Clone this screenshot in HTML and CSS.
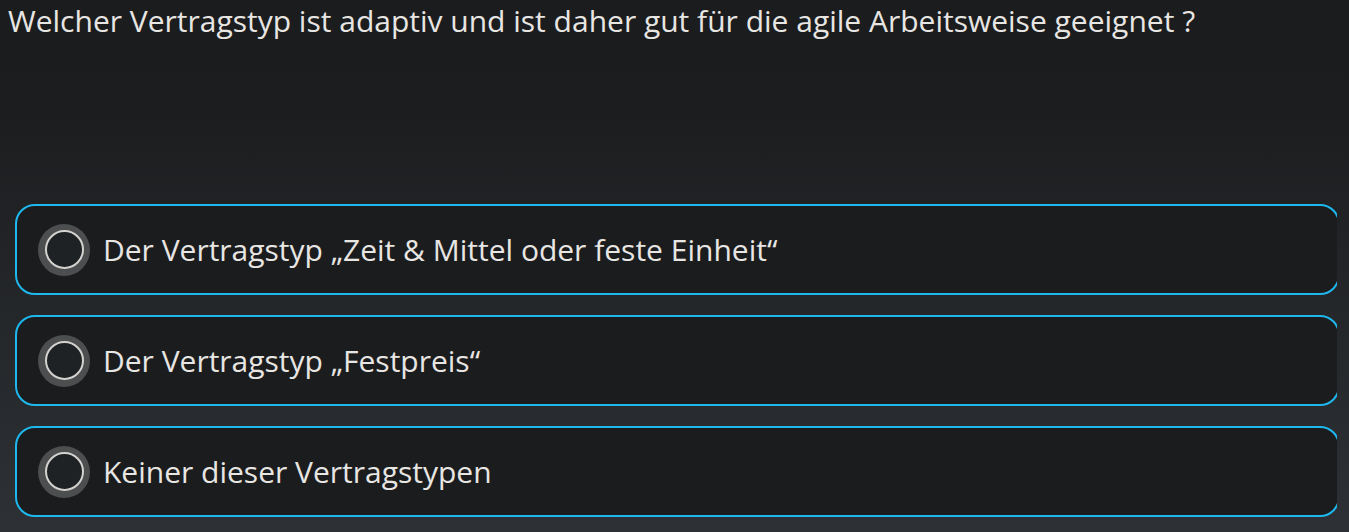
FILE: index.html
```html
<!DOCTYPE html>
<html lang="de">
<head>
<meta charset="utf-8">
<link rel="stylesheet" href="styles.css">
</head>
<body>
<div class="page">
  <h1 class="question">Welcher Vertragstyp ist adaptiv und ist daher gut für die agile Arbeitsweise geeignet ?</h1>
  <div class="answers">
    <label class="answer">
      <span class="radio"><span class="radio-inner"></span></span>
      <span class="answer-text">Der Vertragstyp „Zeit &amp; Mittel oder feste Einheit“</span>
    </label>
    <label class="answer">
      <span class="radio"><span class="radio-inner"></span></span>
      <span class="answer-text">Der Vertragstyp „Festpreis“</span>
    </label>
    <label class="answer">
      <span class="radio"><span class="radio-inner"></span></span>
      <span class="answer-text">Keiner dieser Vertragstypen</span>
    </label>
  </div>
</div>
</body>
</html>
```
FILE: styles.css
```css
html, body {
  margin: 0;
  padding: 0;
  height: 100%;
}
body {
  background: linear-gradient(180deg, #1b1c1e 0%, #1c1d1f 20%, #2d3135 100%);
  color: #e8e6e3;
  font-family: "Open Sans", "Noto Sans", sans-serif;
  overflow: hidden;
}
.page {
  width: 1337px;
  overflow: hidden;
}
.question {
  margin: 0;
  padding: 0 0 0 8px;
  font-size: 30px;
  font-weight: 400;
  line-height: 41px;
}
.answers {
  display: flex;
  flex-direction: column;
  gap: 20px;
  margin-top: 163px;
  padding-left: 15px;
}
.answer {
  display: flex;
  align-items: center;
  gap: 13px;
  width: 1325px;
  height: 91px;
  flex-shrink: 0;
  box-sizing: border-box;
  border: 2px solid #1fb8ee;
  border-radius: 20px;
  background: #1b1c1e;
  padding-left: 21px;
}
.radio {
  width: 52px;
  height: 52px;
  border-radius: 50%;
  background: #4d4e4f;
  display: flex;
  align-items: center;
  justify-content: center;
  flex-shrink: 0;
}
.radio-inner {
  width: 35px;
  height: 35px;
  border-radius: 50%;
  border: 2px solid #d4d2cf;
  background: #1e2224;
}
.answer-text {
  font-size: 30px;
  line-height: 41px;
}
```
